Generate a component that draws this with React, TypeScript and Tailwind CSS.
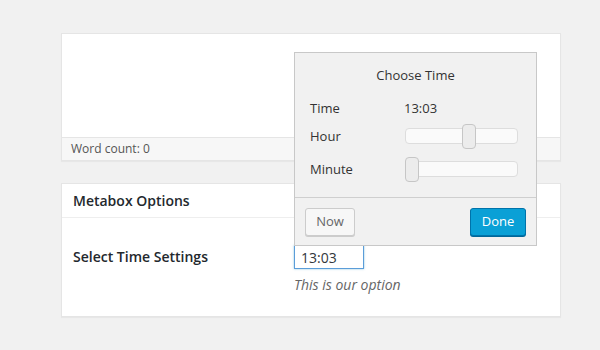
import React from "react";

function Slider({ pos }: { pos: number }) {
  return (
    <div className="relative h-[16px] w-[113px] rounded-[4px] border border-[#dddddd] bg-[#fafafa]">
      <div
        className="absolute top-[-5px] h-[25px] w-[14px] rounded-[4px] border border-[#c6c6c6] bg-[#ececec]"
        style={{ left: pos }}
      />
    </div>
  );
}

export default function App() {
  return (
    <div
      className="h-[350px] w-[600px] overflow-hidden bg-[#f1f1f1] pt-[33px] pl-[61px] text-[#444444]"
      style={{ fontFamily: '"Open Sans", "Noto Sans", sans-serif' }}
    >
      {/* Editor card */}
      <div className="flex h-[128px] w-[500px] flex-col border border-[#e5e5e5] bg-white shadow-[0_1px_1px_rgba(0,0,0,0.04)]">
        <div className="flex-1" />
        <div className="flex h-[23px] items-center border-t border-[#e5e5e5] bg-[#f7f7f7] px-[9px] text-[12px] text-[#555]">
          Word count: 0
        </div>
      </div>

      {/* Metabox */}
      <div className="mt-[22px] h-[134px] w-[500px] border border-[#e5e5e5] bg-white shadow-[0_1px_1px_rgba(0,0,0,0.04)]">
        <div className="flex h-[34px] items-center border-b border-[#eeeeee] px-[11px] text-[14px] font-semibold text-[#23282d]">
          Metabox Options
        </div>
        <div className="flex pt-[27px] pl-[11px]">
          <div className="w-[221px] pt-[1px] text-[14px] font-semibold leading-[22px] text-[#23282d]">
            Select Time Settings
          </div>
          <div className="flex flex-col">
            <div className="relative">
              <div className="flex h-[24px] w-[70px] items-center border border-[#5b9dd9] bg-white px-[6px] text-[14px] text-[#32373c] shadow-[0_0_2px_rgba(30,140,190,0.5)]">
                13:03
              </div>
              {/* Time picker popup */}
              <div className="absolute bottom-[23px] left-0 flex h-[194px] w-[243px] flex-col border border-[#c8c8c8] bg-[#f1f1f1] text-[13px] text-[#333]">
                <div className="pt-[12px] text-center leading-[20px]">Choose Time</div>
                <div className="mt-[13px] flex items-center pl-[15px] leading-[20px]">
                  <span className="w-[94px]">Time</span>
                  <span>13:03</span>
                </div>
                <div className="mt-[8px] flex items-center pl-[15px]">
                  <span className="w-[95px] leading-[20px]">Hour</span>
                  <Slider pos={56} />
                </div>
                <div className="mt-[13px] flex items-center pl-[15px]">
                  <span className="w-[95px] leading-[20px]">Minute</span>
                  <Slider pos={-1} />
                </div>
                <div className="mt-[18px] flex flex-1 items-start justify-between border-t border-[#cfcfcf] px-[10px] pt-[10px]">
                  <button className="h-[28px] w-[50px] rounded-[3px] border border-[#cccccc] bg-[#f7f7f7] text-[13px] text-[#666] shadow-[0_1px_0_#ccc]">
                    Now
                  </button>
                  <button className="h-[28px] w-[56px] rounded-[3px] border border-[#0073aa] bg-[#0aa0d6] text-[13px] text-white shadow-[0_1px_0_#006799]">
                    Done
                  </button>
                </div>
              </div>
            </div>
            <div className="mt-[5px] text-[14px] italic leading-[22px] text-[#666]">
              This is our option
            </div>
          </div>
        </div>
      </div>
    </div>
  );
}
